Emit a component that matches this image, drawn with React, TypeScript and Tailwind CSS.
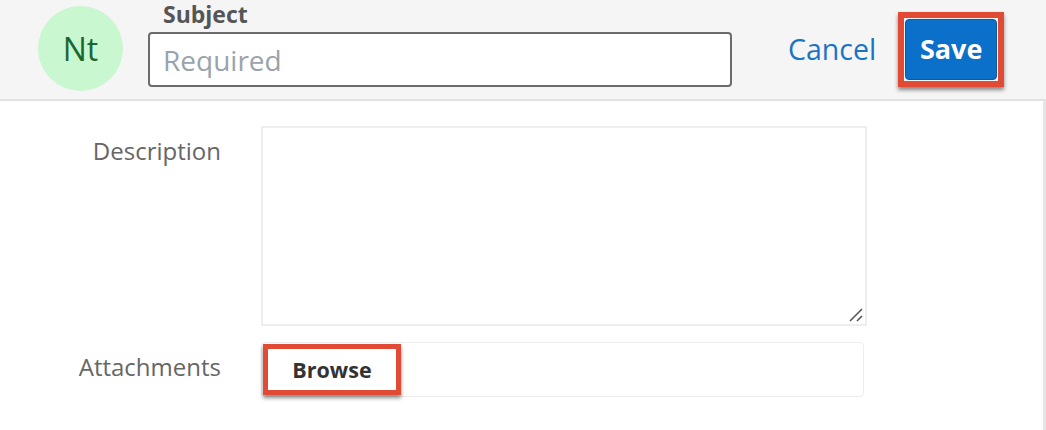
import React from "react";

export default function App() {
  return (
    <div
      className="w-[1046px] h-[430px] bg-white overflow-hidden"
      style={{ fontFamily: '"Open Sans", "Noto Sans", sans-serif' }}
    >
      {/* Header */}
      <div className="h-[101px] bg-[#f5f5f5] border-b-2 border-[#e2e2e2] flex items-start">
        <div className="ml-[38px] mt-[6px] w-[85px] h-[85px] rounded-full bg-[#c8f7d0] flex items-center justify-center">
          <span className="text-[32px] text-[#1a6633] leading-none">Nt</span>
        </div>
        <div className="ml-[25px] flex flex-col">
          <div className="h-[32px] pt-[1px] pl-[15px] text-[23px] font-bold text-[#555] leading-[27px]">
            Subject
          </div>
          <div className="w-[584px] h-[55px] border-2 border-[#6b6b6b] rounded-[4px] bg-white flex items-center pl-[13px]">
            <span className="text-[28px] text-[#9aa3ab] leading-none">Required</span>
          </div>
        </div>
        <div className="ml-[56px] mt-[31px] text-[28.5px] text-[#1a74c4] leading-[36px]">Cancel</div>
        <div className="ml-[22px] mt-[12px] w-[106px] h-[75px] border-[6px] border-[#e14b35] shadow-[0_3px_4px_rgba(0,0,0,0.45)] p-[1px] bg-[#f5f5f5]">
          <div className="w-full h-full bg-[#0b70c9] border border-[#0a5aa3] rounded-[4px] flex items-center justify-center">
            <span className="text-[27px] font-bold text-white leading-none -mt-[2px]">Save</span>
          </div>
        </div>
      </div>

      {/* Body */}
      <div className="h-[329px] border-r-[3px] border-[#e6e6e6] pt-[25px]">
        <div className="flex items-start">
          <div className="w-[221px] text-right text-[24px] text-[#666] leading-[30px] mt-[10px]">
            Description
          </div>
          <div className="ml-[40px] relative w-[606px] h-[200px] border-2 border-[#eeeeee] bg-white">
            <svg
              className="absolute right-[1px] bottom-[1px]"
              width="16"
              height="16"
              viewBox="0 0 16 16"
            >
              <line x1="2" y1="14" x2="14" y2="2" stroke="#555" strokeWidth="1.6" />
              <line x1="9" y1="14" x2="14" y2="9" stroke="#555" strokeWidth="1.6" />
            </svg>
          </div>
        </div>
        <div className="flex items-center mt-[16px]">
          <div className="w-[221px] text-right text-[24px] text-[#666] leading-[30px] -mt-[6px]">
            Attachments
          </div>
          <div className="ml-[40px] w-[603px] h-[55px] border border-[#ececec] rounded-[4px] bg-white flex items-center">
            <div className="ml-[1px] w-[138px] h-[51px] border-[5px] border-[#e14b35] shadow-[0_3px_4px_rgba(0,0,0,0.45)] bg-white flex items-center justify-center">
              <span className="text-[21.5px] font-bold text-[#333] leading-none">Browse</span>
            </div>
          </div>
        </div>
      </div>
    </div>
  );
}
